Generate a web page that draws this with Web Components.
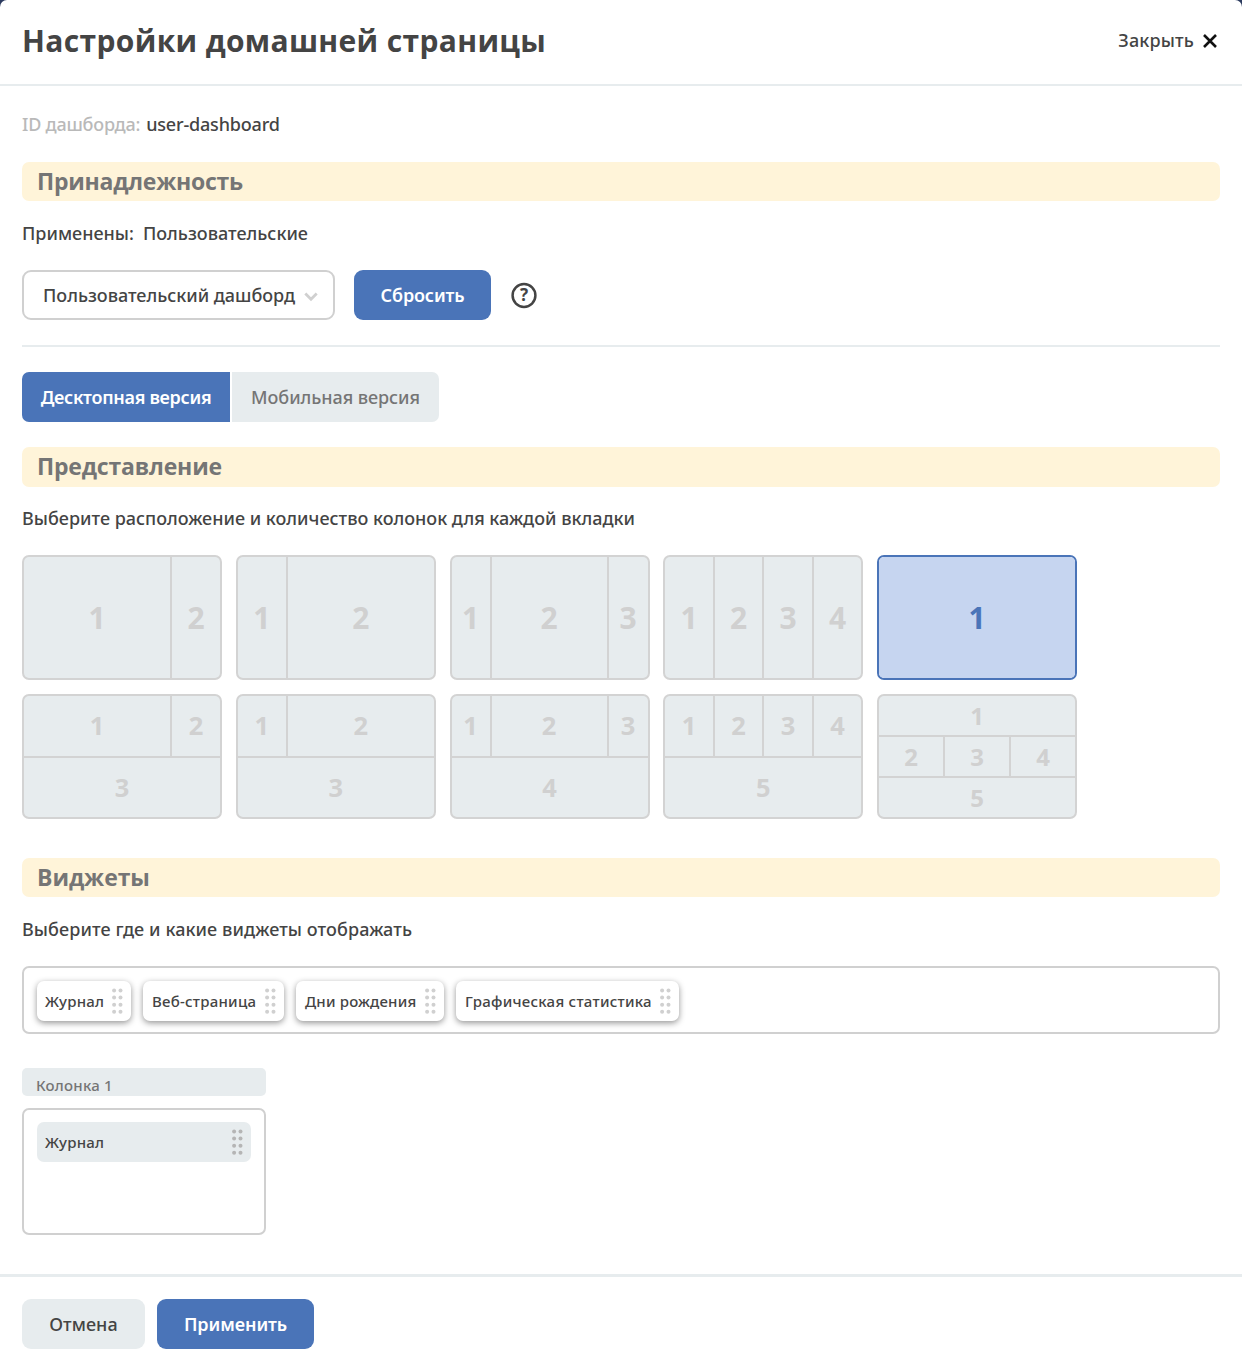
<!DOCTYPE html>
<html lang="ru">
<head>
<meta charset="utf-8">
<title>Настройки домашней страницы</title>
<style>
  html { background: #2c3b5f; }
  body { margin: 0; font: 500 18px/24px "Noto Sans", sans-serif; color: #444; }
</style>
</head>
<body>
<home-settings></home-settings>
<script>
const define = (name, html, setup) => {
  const template = document.createElement('template');
  template.innerHTML = html;
  customElements.define(name, class extends HTMLElement {
    constructor() {
      super();
      this.attachShadow({ mode: 'open' }).append(template.content.cloneNode(true));
    }
    connectedCallback() { if (setup) setup(this, this.shadowRoot); }
  });
};

define('section-title', `
<style>
  :host { display: flex; box-sizing: border-box; height: 39px; padding: 0 15px 1px; align-items: center;
    border-radius: 7px; background: #fff4d9; color: #757575; font: 700 23px/36px "Open Sans", sans-serif; }
</style><slot></slot>`);

define('ui-button', `
<style>
  :host { display: flex; box-sizing: border-box; height: 50px; align-items: center; justify-content: center;
    border-radius: 9px; background: #e7ecee; color: #444; }
  :host([primary]) { background: #4a74b8; color: #fff; font-weight: 600; }
</style><slot></slot>`);

define('ui-select', `
<style>
  :host { display: flex; box-sizing: border-box; width: 313px; height: 50px; padding: 0 15px 0 19px; align-items: center;
    justify-content: space-between; border: 2px solid #d0d0d0; border-radius: 9px; letter-spacing: -.02px; }
  svg { margin-top: 3px; }
</style><slot></slot>
<svg width="14" height="10" viewBox="0 0 14 10" fill="none" stroke="#d0d0d0" stroke-width="2.8"><path d="M1.3 1.6 7 7.3 12.7 1.6"/></svg>`);

define('help-icon', `
<style>
  :host { display: grid; width: 26px; height: 27px; place-items: center; font-size: 17px; font-weight: 700; line-height: 20px; }
  svg, span { grid-area: 1 / 1; }
</style>
<svg width="26" height="27" viewBox="0 0 26 27" fill="none" stroke="#444" stroke-width="2.5"><circle cx="13" cy="13.5" r="11.4"/></svg>
<span><slot></slot></span>`);

define('version-tabs', `
<style>
  :host { display: flex; gap: 2px; height: 50px; line-height: 50px; text-align: center; }
  .on { width: 208px; border-radius: 7px 0 0 7px; background: #4a74b8; color: #fff; font-weight: 600; letter-spacing: -.3px; }
  .off { width: 207px; border-radius: 0 7px 7px 0; background: #e7ecee; color: #757575; letter-spacing: -.06px; }
</style>
<div class="on"><slot name="desktop"></slot></div><div class="off"><slot name="mobile"></slot></div>`);

/* rows="146px 48px|1fr": a bar separates rows, spaces separate columns */
define('layout-card', `
<style>
  :host { display: grid; box-sizing: border-box; width: 200px; height: 125px; gap: 2px; overflow: hidden;
    border: 2px solid #d3d3d3; border-radius: 7px; background: #d3d3d3; color: #d0d0d0; font: 700 30px "Open Sans", sans-serif; }
  :host([selected]) { border-color: #4a74b8; background: #c6d5f0; color: #4a74b8; }
  .row { display: grid; gap: 2px; }
  .cell { display: flex; align-items: center; justify-content: center; background: #e7ecee; line-height: 30px; }
  :host([selected]) .cell { background: #c6d5f0; }
</style>`, (host, root) => {
  const rows = host.getAttribute('rows').split('|');
  host.style.gridTemplateRows = ['121px', '60px 59px', '39px 39px 39px'][rows.length - 1];
  host.style.fontSize = ['30px', '25.5px', '24px'][rows.length - 1];
  let n = 0;
  for (const cols of rows) {
    const row = document.createElement('div');
    row.className = 'row';
    row.style.gridTemplateColumns = cols;
    for (const _ of cols.split(' ')) {
      const cell = document.createElement('div');
      cell.className = 'cell';
      cell.style.paddingTop = rows.length === 1 ? '1px' : '0';
      cell.style.paddingBottom = rows.length === 2 ? '2px' : '0';
      cell.textContent = ++n;
      row.append(cell);
    }
    root.append(row);
  }
});

define('widget-chip', `
<style>
  :host { display: flex; box-sizing: border-box; height: 40px; padding: 0 8px; align-items: center; justify-content: space-between;
    border-radius: 7px; background: #fff; box-shadow: 0 2px 6px rgba(0,0,0,.42); font-size: 15px; letter-spacing: .24px; color: #d0d0d0; white-space: nowrap; }
  :host([placed]) { box-shadow: none; background: #e7ecee; color: #b5b5b5; }
  span { color: #444; }
</style><span><slot></slot></span>
<svg width="11" height="26" viewBox="0 0 11 26" fill="currentColor">
  <circle cx="2.1" cy="2.4" r="2"/><circle cx="8.5" cy="2.4" r="2"/>
  <circle cx="2.1" cy="9.5" r="2"/><circle cx="8.5" cy="9.5" r="2"/>
  <circle cx="2.1" cy="16.7" r="2"/><circle cx="8.5" cy="16.7" r="2"/>
  <circle cx="2.1" cy="23.8" r="2"/><circle cx="8.5" cy="23.8" r="2"/>
</svg>`);

define('widget-column', `
<style>
  :host { display: block; width: 244px; }
  .head { box-sizing: border-box; height: 28px; padding: 5px 14px 0; border-radius: 5px; background: #e7ecee;
    color: #757575; font-size: 15px; line-height: 24px; letter-spacing: .22px; }
  .drop { box-sizing: border-box; height: 127px; margin-top: 12px; padding: 12px 13px; border: 2px solid #d0d0d0; border-radius: 7px; }
</style><div class="head"><slot name="head"></slot></div><div class="drop"><slot></slot></div>`);

define('home-settings', `
<style>
  :host { display: flex; flex-direction: column; box-sizing: border-box; height: 1360px; background: #fff; border-radius: 7px 7px 0 0; }
  header { display: flex; box-sizing: border-box; height: 86px; padding: 0 25px 4px 22px; align-items: center; justify-content: space-between; border-bottom: 2px solid #e7ecee; }
  h1 { margin: 2px 0 0; font: 700 30px/44px "Open Sans", sans-serif; letter-spacing: .34px; }
  .close { display: flex; align-items: center; gap: 9px; letter-spacing: .15px; }
  .close svg { margin-top: 1px; }
  main { flex: 1; padding: 26px 22px 0; }
  .id { display: flex; gap: 6px; margin-bottom: 26px; }
  .id span { color: #b9b9b9; letter-spacing: -.22px; }
  .id b { font-weight: 500; letter-spacing: -.18px; }
  .applied { display: flex; gap: 9px; margin: 20px 0 25px; }
  .controls { display: flex; align-items: center; padding-bottom: 25px; border-bottom: 2px solid #e7ecee; margin-bottom: 25px; }
  p { margin: 20px 0 24px; }
  .grid { display: grid; grid-template-columns: repeat(5, 200px); gap: 14px 13.75px; margin-bottom: 39px; }
  .chips { display: flex; box-sizing: border-box; height: 68px; padding: 13px; border: 2px solid #d0d0d0; border-radius: 7px; margin-bottom: 34px; }
  footer { display: flex; box-sizing: border-box; height: 86px; gap: 12px; padding: 22px; border-top: 3px solid #e7ecee; }
</style>
<header>
  <h1>Настройки домашней страницы</h1>
  <div class="close">Закрыть<svg width="14" height="14" viewBox="0 0 14 14" stroke="#111" stroke-width="2.6"><path d="M1 1 13 13M13 1 1 13"/></svg></div>
</header>
<main>
  <div class="id"><span>ID дашборда:</span><b>user-dashboard</b></div>
  <section-title style="letter-spacing:-.24px">Принадлежность</section-title>
  <div class="applied"><span>Применены:</span><span>Пользовательские</span></div>
  <div class="controls">
    <ui-select>Пользовательский дашборд</ui-select>
    <ui-button primary style="width:137px;margin-left:19px;letter-spacing:-.15px">Сбросить</ui-button>
    <help-icon style="margin-left:20px">?</help-icon>
  </div>
  <version-tabs><span slot="desktop">Десктопная версия</span><span slot="mobile">Мобильная версия</span></version-tabs>
  <section-title style="margin-top:25px;height:40px;padding-bottom:2px;letter-spacing:-.18px">Представление</section-title>
  <p style="margin:19px 0 25px">Выберите расположение и количество колонок для каждой вкладки</p>
  <div class="grid">
    <layout-card rows="146px 48px"></layout-card>
    <layout-card rows="48px 146px"></layout-card>
    <layout-card rows="38px 115px 39px"></layout-card>
    <layout-card rows="1fr 1fr 1fr 1fr"></layout-card>
    <layout-card selected rows="1fr"></layout-card>
    <layout-card rows="146px 48px|1fr"></layout-card>
    <layout-card rows="48px 146px|1fr"></layout-card>
    <layout-card rows="38px 115px 39px|1fr"></layout-card>
    <layout-card rows="1fr 1fr 1fr 1fr|1fr"></layout-card>
    <layout-card rows="1fr|1fr 1fr 1fr|1fr"></layout-card>
  </div>
  <section-title style="letter-spacing:-.06px">Виджеты</section-title>
  <p style="margin-bottom:25px;letter-spacing:.09px">Выберите где и какие виджеты отображать</p>
  <div class="chips">
    <widget-chip style="width:94px;margin-right:12px">Журнал</widget-chip>
    <widget-chip style="width:141px;margin-right:12px;padding-left:9px">Веб-страница</widget-chip>
    <widget-chip style="width:148px;margin-right:12px;padding-left:9px;letter-spacing:.18px">Дни рождения</widget-chip>
    <widget-chip style="width:223px;padding-left:9px;letter-spacing:.27px">Графическая статистика</widget-chip>
  </div>
  <widget-column><span slot="head">Колонка 1</span><widget-chip placed>Журнал</widget-chip></widget-column>
</main>
<footer>
  <ui-button style="width:123px;letter-spacing:.05px">Отмена</ui-button>
  <ui-button primary style="width:157px;letter-spacing:-.08px">Применить</ui-button>
</footer>`);
</script>
</body>
</html>
